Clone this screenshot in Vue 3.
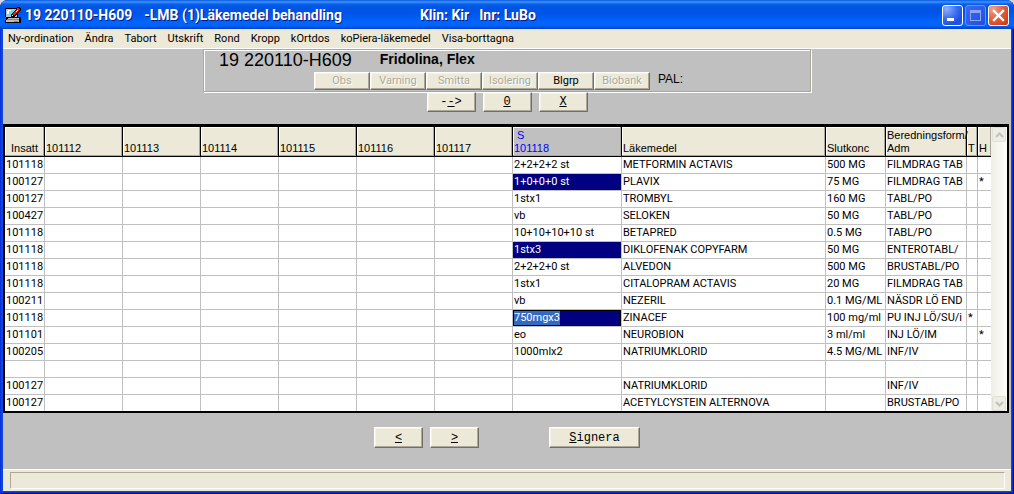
<script setup>
import { onMounted, ref } from 'vue'

const menu = ['Ny-ordination', 'Ändra', 'Tabort', 'Utskrift', 'Rond', 'Kropp', 'kOrtdos', 'koPiera-läkemedel', 'Visa-borttagna']

const flags = [
  { label: 'Obs', on: false },
  { label: 'Varning', on: false },
  { label: 'Smitta', on: false },
  { label: 'Isolering', on: false },
  { label: 'Blgrp', on: true },
  { label: 'Biobank', on: false },
]

const days = ['101112', '101113', '101114', '101115', '101116', '101117']

const rows = [
  { start: '101118', dose: '2+2+2+2 st', drug: 'METFORMIN ACTAVIS', conc: '500 MG', form: 'FILMDRAG TAB' },
  { start: '100127', dose: '1+0+0+0 st', drug: 'PLAVIX', conc: '75 MG', form: 'FILMDRAG TAB', h: '*', marked: true },
  { start: '100127', dose: '1stx1', drug: 'TROMBYL', conc: '160 MG', form: 'TABL/PO' },
  { start: '100427', dose: 'vb', drug: 'SELOKEN', conc: '50 MG', form: 'TABL/PO' },
  { start: '101118', dose: '10+10+10+10 st', drug: 'BETAPRED', conc: '0.5 MG', form: 'TABL/PO' },
  { start: '101118', dose: '1stx3', drug: 'DIKLOFENAK COPYFARM', conc: '50 MG', form: 'ENTEROTABL/', marked: true },
  { start: '101118', dose: '2+2+2+0 st', drug: 'ALVEDON', conc: '500 MG', form: 'BRUSTABL/PO' },
  { start: '101118', dose: '1stx1', drug: 'CITALOPRAM ACTAVIS', conc: '20 MG', form: 'FILMDRAG TAB' },
  { start: '100211', dose: 'vb', drug: 'NEZERIL', conc: '0.1 MG/ML', form: 'NÄSDR LÖ END' },
  { start: '101118', dose: '750mgx3', drug: 'ZINACEF', conc: '100 mg/ml', form: 'PU INJ LÖ/SU/i', t: '*', editing: true },
  { start: '101101', dose: 'eo', drug: 'NEUROBION', conc: '3 ml/ml', form: 'INJ LÖ/IM', h: '*' },
  { start: '100205', dose: '1000mlx2', drug: 'NATRIUMKLORID', conc: '4.5 MG/ML', form: 'INF/IV' },
  {},
  { start: '100127', drug: 'NATRIUMKLORID', form: 'INF/IV' },
  { start: '100127', drug: 'ACETYLCYSTEIN ALTERNOVA', form: 'BRUSTABL/PO' },
]

const editedDose = ref('750mgx3')
const doseInput = ref(null)

onMounted(() => {
  const el = Array.isArray(doseInput.value) ? doseInput.value[0] : doseInput.value
  el?.focus()
  el?.select()
})
</script>

<template>
  <div class="window">
    <header class="titlebar">
      <svg class="app-icon" viewBox="0 0 16 16" shape-rendering="crispEdges" aria-hidden="true">
        <path fill="#000" d="M0 1h13v9H0zM1 10h15v6H0v-3h1z" />
        <path fill="#c0c0c0" d="M1 2h11v8H1z" />
        <path fill="#5fe3ea" d="M2 3h8v6H2z" />
        <path fill="#fff" d="M3 3h3v1H3zM2 4h2v3H2z" />
        <path fill="#c0c0c0" d="M3 11h11v1H3zM1 13h13v2H1z" />
        <path fill="#808080" d="M2 12h12v1H2zM9 14h4v1H9z" />
        <path fill="#000" d="M12 0h3v1h1v3h-1v1h-1v1h-1v1h-1v1h-1v1h-1v1H6V7h1V6h1V5h1V4h1V3h1V2h1z" />
        <path fill="#e02020" d="M12 1h2v1h1v1h-1v1h-1v1h-1v1h-1v1h-1v1H8V6h1V5h1V4h1V3h1z" />
        <path fill="#fff" d="M12 3h1v1h-1v1h-1V4h1zM7 8h1v1H7z" />
      </svg>
      <h1 class="title">
        <span class="title-id">19 220110-H609</span>
        <span class="title-view">-LMB (1)Läkemedel behandling</span>
        <span>Klin: Kir</span>
        <span class="title-unit">Inr: LuBo</span>
      </h1>
      <div class="controls">
        <button class="ctl" type="button" aria-label="Minimera">
          <svg viewBox="0 0 21 21" shape-rendering="crispEdges"><path fill="#fff" d="M5 13h7v3H5z" /></svg>
        </button>
        <button class="ctl ctl-off" type="button" disabled aria-label="Maximera">
          <svg viewBox="0 0 21 21" shape-rendering="crispEdges"><path fill="#8ea4ee" fill-rule="evenodd" d="M5 5h11v11H5zM6 8v7h9V8z" /></svg>
        </button>
        <button class="ctl ctl-close" type="button" aria-label="Stäng">
          <svg viewBox="0 0 21 21"><path d="M6 6l9 9M15 6l-9 9" stroke="#fff" stroke-width="2.4" stroke-linecap="square" /></svg>
        </button>
      </div>
    </header>

    <nav class="menubar">
      <button v-for="item in menu" :key="item" type="button">{{ item }}</button>
    </nav>

    <main class="body">
      <section class="patient">
        <div class="patient-head">
          <span class="patient-id">19 220110-H609</span>
          <strong class="patient-name">Fridolina, Flex</strong>
        </div>
        <div class="flags">
          <button v-for="f in flags" :key="f.label" class="btn flag" type="button" :disabled="!f.on">{{ f.label }}</button>
          <span class="pal">PAL:</span>
        </div>
      </section>

      <div class="steps">
        <button class="btn step" type="button">-<u>-</u>&gt;</button>
        <button class="btn step" type="button"><u>0</u></button>
        <button class="btn step" type="button"><u>X</u></button>
      </div>

      <div class="grid">
        <table>
          <colgroup>
            <col class="c-start" />
            <col v-for="d in days" :key="d" class="c-day" />
            <col class="c-today" />
            <col />
            <col class="c-conc" />
            <col class="c-form" />
            <col class="c-t" />
            <col class="c-h" />
          </colgroup>
          <thead>
            <tr>
              <th class="center">Insatt</th>
              <th v-for="d in days" :key="d">{{ d }}</th>
              <th class="today"><span class="sign">S</span><br />101118</th>
              <th>Läkemedel</th>
              <th>Slutkonc</th>
              <th>Beredningsform/<br />Adm</th>
              <th>T</th>
              <th>H</th>
            </tr>
          </thead>
          <tbody>
            <tr v-for="(r, i) in rows" :key="i">
              <td>{{ r.start }}</td>
              <td v-for="d in days" :key="d"></td>
              <td v-if="r.editing" class="edit">
                <input ref="doseInput" v-model="editedDose" type="text" aria-label="Dos 101118" />
              </td>
              <td v-else :class="{ marked: r.marked }">{{ r.dose }}</td>
              <td>{{ r.drug }}</td>
              <td>{{ r.conc }}</td>
              <td>{{ r.form }}</td>
              <td>{{ r.t }}</td>
              <td>{{ r.h }}</td>
            </tr>
          </tbody>
        </table>
        <div class="scroll">
          <button type="button" disabled aria-label="Rulla upp">
            <svg viewBox="0 0 9 6"><path d="M1 5l3.500-3.500L8 5" fill="none" stroke="#c3c2b8" stroke-width="2" /></svg>
          </button>
          <button type="button" disabled aria-label="Rulla ned">
            <svg viewBox="0 0 9 6"><path d="M1 1l3.500 3.500L8 1" fill="none" stroke="#c3c2b8" stroke-width="2" /></svg>
          </button>
        </div>
      </div>

      <div class="actions">
        <button class="btn action" type="button"><u>&lt;</u></button>
        <button class="btn action" type="button"><u>&gt;</u></button>
        <button class="btn action sign-btn" type="button"><u>S</u>ignera</button>
      </div>
    </main>

    <footer class="status"><div class="status-field"></div></footer>
  </div>
</template>

<style>
body {
  background: #d6d6d6;
}
</style>

<style scoped>
* {
  box-sizing: border-box;
}

button,
input {
  margin: 0;
  padding: 0;
  border: 0;
  font: inherit;
  color: inherit;
}

.window {
  display: flex;
  flex-direction: column;
  min-height: 100vh;
  padding: 0 3px 3px;
  border-radius: 8px 8px 0 0;
  overflow: hidden;
  background: #0a48dd;
  box-shadow: inset 1px 0 #0831d9, inset -1px -1px #00138c, inset -2px -2px #0830c0;
  font-family: Roboto, "Liberation Sans", Arial, sans-serif;
  font-size: 11px;
  color: #000;
}

.titlebar {
  display: flex;
  align-items: center;
  height: 29px;
  margin: 0 -3px;
  padding: 1px 5px 0;
  background: linear-gradient(#0a5ae0 0, #3a93ff 2px, #0a62e8 4px, #0054e3 7px, #0055ea 14px, #0066ff 23px, #0062f5 26px, #003dc8 29px);
}

.app-icon {
  width: 16px;
  height: 16px;
  flex: none;
}

.title {
  display: flex;
  flex: 1;
  margin: 0 0 0 4px;
  font: bold 14px/20px Roboto, sans-serif;
  color: #fff;
  text-shadow: 1px 1px #0a1883;
  white-space: pre;
}

.title-id {
  margin-right: 12px;
}

.title-view {
  margin-right: 78px;
}

.title-unit {
  margin-left: 10px;
}

.controls {
  display: flex;
  gap: 2px;
}

.ctl {
  width: 21px;
  height: 21px;
  border: 1px solid #fff;
  border-radius: 3px;
  background: radial-gradient(circle at 20% 15%, #8fb0ff, #3a6ef0 45%, #1c50dc 75%, #1a5cf0);
}

.ctl svg {
  display: block;
  width: 21px;
  height: 21px;
  margin: -1px;
}

.ctl-off {
  border-color: #6e92f0;
  background: linear-gradient(135deg, #3a6cf0, #1c4fe0);
}

.ctl-close {
  background: radial-gradient(circle at 20% 15%, #f0a08c, #e25c3c 50%, #d8421c 80%, #c83c10);
}

.menubar {
  display: flex;
  gap: 11px;
  height: 20px;
  padding: 0 5px;
  background: #ece9d8;
  border-bottom: 1px solid #fff;
}

.menubar button {
  background: none;
  line-height: 18px;
  white-space: nowrap;
}

.body {
  display: flex;
  flex: 1;
  flex-direction: column;
  align-items: center;
  background: #c0c0c0;
}

.patient {
  width: 100%;
  max-width: 608px;
  height: 43px;
  border: 1px solid #aca899;
  box-shadow: 1px 1px #fff, inset 1px 1px #fff;
}

.patient-head {
  display: flex;
  gap: 28px;
  height: 22px;
  padding-left: 15px;
  font-family: "Liberation Sans", Arial, sans-serif;
}

.patient-id {
  font-size: 18px;
  line-height: 20px;
}

.patient-name {
  font-size: 14px;
  line-height: 19px;
}

.flags {
  display: flex;
  padding-left: 110px;
}

.btn {
  background: #ece9d8;
  border: 1px solid;
  border-color: #fff #716f64 #716f64 #fff;
  box-shadow: inset -1px -1px #aca899, inset 1px 1px #f5f3e8;
}

.flag {
  width: 56px;
  height: 18px;
  line-height: 16px;
}

.flag:disabled {
  color: #aca899;
  text-shadow: 1px 1px #fff;
}

.pal {
  margin-left: 8px;
  font: 12px/14px "Liberation Sans", Arial, sans-serif;
}

.steps {
  display: flex;
  gap: 7px;
}

.step,
.action {
  width: 49px;
  font: 12px/14px "Liberation Mono", "Courier New", monospace;
}

.step {
  height: 20px;
}

.grid {
  display: flex;
  align-self: stretch;
  margin: 12px 2px 0 0;
  border: 2px solid #000;
  border-top-width: 3px;
  background: #fff;
}

table {
  flex: 1;
  width: 0;
  table-layout: fixed;
  border-collapse: separate;
  border-spacing: 0;
}

.c-start { width: 40px; }
.c-day { width: 78px; }
.c-today { width: 109px; }
.c-conc { width: 60px; }
.c-form { width: 81px; }
.c-t { width: 11px; }
.c-h { width: 13px; }

th,
td {
  padding: 0 0 0 1px;
  text-align: left;
  font-weight: normal;
  white-space: nowrap;
}

th {
  height: 30px;
  padding-bottom: 1px;
  vertical-align: bottom;
  font-family: "Liberation Sans", Arial, sans-serif;
  line-height: 13px;
  background: #ece9d8;
  border-right: 1px solid #000;
  border-bottom: 1px solid #000;
  box-shadow: inset -1px -1px #aca899, inset 1px 1px #fff;
}

th:last-child {
  border-right: 0;
}

th.center {
  padding-left: 0;
  text-align: center;
}

th.today {
  background: #c0c0c0;
  color: #00f;
}

.sign {
  margin-left: 3px;
}

td {
  height: 17px;
  overflow: hidden;
  line-height: 16px;
  border-right: 1px solid #c0c0c0;
  border-bottom: 1px solid #c0c0c0;
}

td:last-child {
  border-right: 0;
}

tbody tr:last-child td {
  height: 16px;
  border-bottom: 0;
}

td.marked {
  background: #000080;
  color: #fff;
}

td.edit {
  padding: 0;
}

.edit input {
  display: block;
  width: 100%;
  height: 16px;
  border: 1px solid #000;
  border-radius: 0;
  background: #000080;
  color: #fff;
  outline: 0;
}

.edit input::selection {
  background: #316ac5;
  color: #fff;
}

.scroll {
  display: flex;
  flex-direction: column;
  justify-content: space-between;
  width: 16px;
  padding: 0 1px;
  background: linear-gradient(90deg, #f0efe6, #fefefb);
}

.scroll button {
  display: grid;
  place-items: center;
  height: 15px;
  background: #eeede5;
  border: 1px solid #e2e0d4;
  border-radius: 2px;
}

.scroll svg {
  width: 9px;
  height: 6px;
}

.actions {
  display: flex;
  gap: 7px;
  margin: 14px 0 20px;
}

.action {
  height: 21px;
}

.sign-btn {
  width: 91px;
  margin-left: 63px;
}

.status {
  padding: 2px 6px 2px 7px;
  background: #ece9d8;
  border-top: 1px solid #fff;
}

.status-field {
  height: 17px;
  border: 1px solid;
  border-color: #aca899 #fff #fff #aca899;
}
</style>
